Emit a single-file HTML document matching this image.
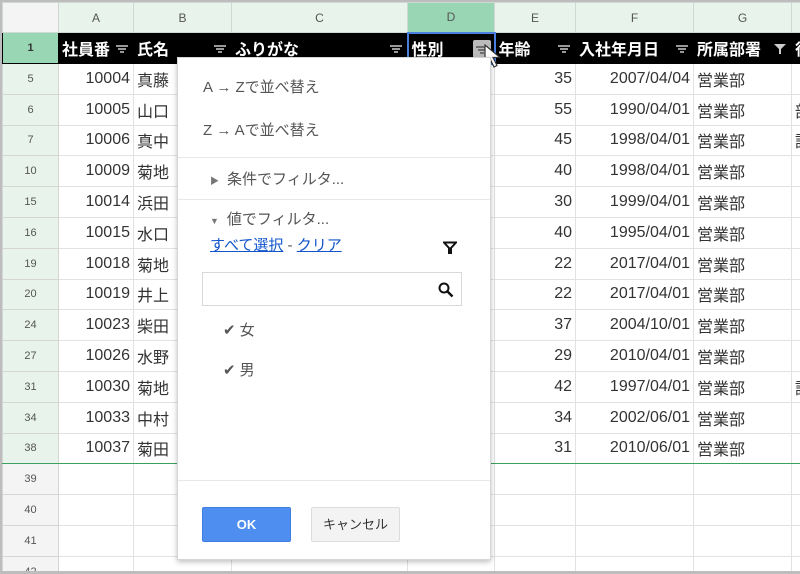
<!DOCTYPE html>
<html><head><meta charset="utf-8"><style>
*{margin:0;padding:0;box-sizing:border-box}
body{width:800px;height:574px;overflow:hidden;background:#fff;font-family:"Liberation Sans","Noto Sans CJK JP",sans-serif;position:relative}
.wrap{position:absolute;left:0;top:0;width:800px;height:574px;border:2px solid #bdbdbd;border-right:none;overflow:hidden}
table{border-collapse:collapse;table-layout:fixed;position:absolute;left:0;top:0;width:801px}
td{border:1px solid #e2e2e2;height:30.8px;font-size:16px;color:#333;white-space:nowrap;overflow:hidden;padding:0 3px}
tr.h td{height:30px;background:#e8f3ec;color:#555;font-size:12px;text-align:center;border-color:#cfd8d2}
tr.h td.c0{background:#f4f4f4}
tr.h td.sel{background:#99d6b4}
td.rn{background:#f4f4f4;color:#555;font-size:11px;text-align:center;border-color:#d5d5d5}
tr.d td.rn{background:#e8f3ec}
tr.r1 td{background:#000;color:#fff;font-weight:bold;font-size:16px;height:31px;border-color:#000;position:relative}
tr.r1 td.rn{background:#99d6b4;color:#333;font-size:11px}
.f{position:absolute;right:5px;top:12px;width:12px;height:8px}
.n{text-align:right}
tr.last td{border-bottom:1px solid #3c9e5f}
.pop{position:absolute;left:177px;top:57px;width:314px;height:503px;background:#fff;border:1px solid #d6d6d6;box-shadow:0 2px 5px rgba(0,0,0,.25);color:#555;font-size:15px}
.pop .t{position:absolute;left:25px}
.sep{position:absolute;left:0;right:0;height:1px;background:#e8e8e8}
a{color:#1155cc;text-decoration:underline}
</style></head><body>
<div class="wrap">
<table>
<colgroup><col style="width:56px"><col style="width:75px"><col style="width:98px"><col style="width:176px"><col style="width:87px"><col style="width:81px"><col style="width:118px"><col style="width:98px"><col style="width:12px"></colgroup>
<tr class="h"><td class="c0"></td><td>A</td><td>B</td><td>C</td><td class="sel">D</td><td>E</td><td>F</td><td>G</td><td></td></tr>
<tr class="r1"><td class="rn">1</td><td>社員番<svg class="f" viewBox="0 0 12 8"><path d="M0 1h12M2 4h8M4 7h4" stroke="#ccc" stroke-width="1.5"/></svg></td><td>氏名<svg class="f" viewBox="0 0 12 8"><path d="M0 1h12M2 4h8M4 7h4" stroke="#ccc" stroke-width="1.5"/></svg></td><td>ふりがな<svg class="f" viewBox="0 0 12 8"><path d="M0 1h12M2 4h8M4 7h4" stroke="#ccc" stroke-width="1.5"/></svg></td><td style="border:2px solid #4a7fe0">性別<span style="position:absolute;right:3px;top:6px;width:18px;height:18px;background:#bbb;border-radius:2px"></span><svg class="f" viewBox="0 0 12 8" style="right:6px"><path d="M0 1h12M2 4h8M4 7h4" stroke="#555" stroke-width="1.5"/></svg></td><td>年齢<svg class="f" viewBox="0 0 12 8"><path d="M0 1h12M2 4h8M4 7h4" stroke="#ccc" stroke-width="1.5"/></svg></td><td>入社年月日<svg class="f" viewBox="0 0 12 8"><path d="M0 1h12M2 4h8M4 7h4" stroke="#ccc" stroke-width="1.5"/></svg></td><td>所属部署<svg class="f" viewBox="0 0 12 10" style="top:11px;height:10px"><path d="M0 0h12L7 5v5H5V5z" fill="#ccc"/></svg></td><td>役</td></tr>
<tr class="d"><td class="rn">5</td><td class="n">10004</td><td>真藤</td><td></td><td></td><td class="n">35</td><td class="n">2007/04/04</td><td>営業部</td><td></td></tr>
<tr class="d"><td class="rn">6</td><td class="n">10005</td><td>山口</td><td></td><td></td><td class="n">55</td><td class="n">1990/04/01</td><td>営業部</td><td>部</td></tr>
<tr class="d"><td class="rn">7</td><td class="n">10006</td><td>真中</td><td></td><td></td><td class="n">45</td><td class="n">1998/04/01</td><td>営業部</td><td>課</td></tr>
<tr class="d"><td class="rn">10</td><td class="n">10009</td><td>菊地</td><td></td><td></td><td class="n">40</td><td class="n">1998/04/01</td><td>営業部</td><td></td></tr>
<tr class="d"><td class="rn">15</td><td class="n">10014</td><td>浜田</td><td></td><td></td><td class="n">30</td><td class="n">1999/04/01</td><td>営業部</td><td></td></tr>
<tr class="d"><td class="rn">16</td><td class="n">10015</td><td>水口</td><td></td><td></td><td class="n">40</td><td class="n">1995/04/01</td><td>営業部</td><td></td></tr>
<tr class="d"><td class="rn">19</td><td class="n">10018</td><td>菊地</td><td></td><td></td><td class="n">22</td><td class="n">2017/04/01</td><td>営業部</td><td></td></tr>
<tr class="d"><td class="rn">20</td><td class="n">10019</td><td>井上</td><td></td><td></td><td class="n">22</td><td class="n">2017/04/01</td><td>営業部</td><td></td></tr>
<tr class="d"><td class="rn">24</td><td class="n">10023</td><td>柴田</td><td></td><td></td><td class="n">37</td><td class="n">2004/10/01</td><td>営業部</td><td></td></tr>
<tr class="d"><td class="rn">27</td><td class="n">10026</td><td>水野</td><td></td><td></td><td class="n">29</td><td class="n">2010/04/01</td><td>営業部</td><td></td></tr>
<tr class="d"><td class="rn">31</td><td class="n">10030</td><td>菊地</td><td></td><td></td><td class="n">42</td><td class="n">1997/04/01</td><td>営業部</td><td>課</td></tr>
<tr class="d"><td class="rn">34</td><td class="n">10033</td><td>中村</td><td></td><td></td><td class="n">34</td><td class="n">2002/06/01</td><td>営業部</td><td></td></tr>
<tr class="d last"><td class="rn">38</td><td class="n">10037</td><td>菊田</td><td></td><td></td><td class="n">31</td><td class="n">2010/06/01</td><td>営業部</td><td></td></tr>
<tr><td class="rn">39</td><td></td><td></td><td></td><td></td><td></td><td></td><td></td><td></td></tr>
<tr><td class="rn">40</td><td></td><td></td><td></td><td></td><td></td><td></td><td></td><td></td></tr>
<tr><td class="rn">41</td><td></td><td></td><td></td><td></td><td></td><td></td><td></td><td></td></tr>
<tr><td class="rn">42</td><td></td><td></td><td></td><td></td><td></td><td></td><td></td><td></td></tr>
</table>
</div>
<div style="position:absolute;left:0;top:571px;width:800px;height:3px;background:#bdbdbd"></div>
<svg style="position:absolute;left:484px;top:44px" width="16" height="26" viewBox="0 0 16 26"><path d="M1 1v19l5-5 4 8 3-1.5-4-8h7z" fill="#fff" stroke="#333" stroke-width="1.2"/></svg>
<div class="pop">
<div class="t" style="top:18px">A → Zで並べ替え</div>
<div class="t" style="top:61px">Z → Aで並べ替え</div>
<div class="sep" style="top:99px"></div>
<div class="t" style="top:110px;left:32px"><span style="font-size:9px;color:#777;margin-right:8px">▶</span>条件でフィルタ...</div>
<div class="sep" style="top:141px"></div>
<div class="t" style="top:150px;left:32px"><span style="font-size:9px;color:#777;margin-right:8px">▼</span>値でフィルタ...</div>
<div class="t" style="top:176px;left:32px"><a>すべて選択</a> - <a>クリア</a></div>
<svg style="position:absolute;left:265px;top:183px" width="14" height="13" viewBox="0 0 14 13"><path d="M1 1.5h12L8 7v5H6V7z" fill="none" stroke="#111" stroke-width="2"/></svg>
<div style="position:absolute;left:24px;top:214px;width:260px;height:34px;border:1px solid #d9d9d9"></div>
<svg style="position:absolute;left:260px;top:224px" width="16" height="16" viewBox="0 0 16 16"><circle cx="6" cy="6" r="4.5" fill="none" stroke="#111" stroke-width="2"/><path d="M9.5 9.5l5 5" stroke="#111" stroke-width="2.5"/></svg>
<div class="t" style="top:261px;left:45px"><span style="color:#555;margin-right:4px">✔</span>女</div>
<div class="t" style="top:301px;left:45px"><span style="color:#555;margin-right:4px">✔</span>男</div>
<div class="sep" style="top:422px"></div>
<div style="position:absolute;left:24px;top:449px;width:89px;height:35px;background:#4d8ef0;border:1px solid #3f7fe0;border-radius:2px;color:#fff;font-weight:bold;font-size:13px;text-align:center;line-height:33px">OK</div>
<div style="position:absolute;left:133px;top:449px;width:89px;height:35px;background:#f3f3f3;border:1px solid #dcdcdc;border-radius:2px;color:#333;font-size:13px;text-align:center;line-height:33px">キャンセル</div>
</div>
</body></html>
